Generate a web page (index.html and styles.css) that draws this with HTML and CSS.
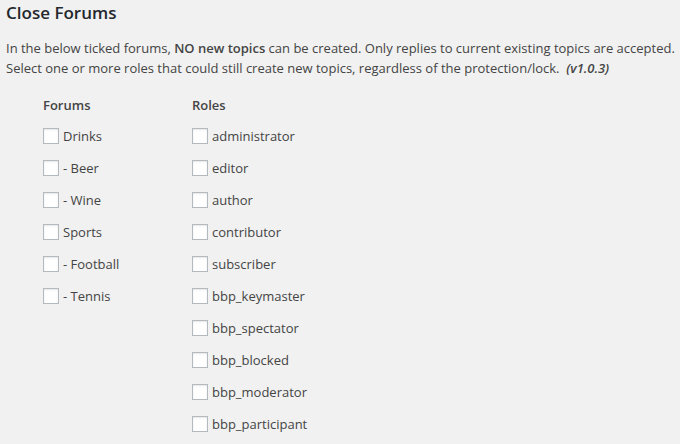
FILE: index.html
```html
<!DOCTYPE html>
<html>
<head>
<meta charset="utf-8">
<link rel="stylesheet" href="styles.css">
</head>
<body>
<div class="wrap">
  <h2 class="title">Close Forums</h2>
  <p class="intro">In the below ticked forums, <strong>NO new topics</strong> can be created. Only replies to current existing topics are accepted.<br>Select one or more roles that could still create new topics, regardless of the protection/lock.&nbsp; <em class="ver">(v1.0.3)</em></p>
  <div class="cols">
    <div class="col col-forums">
      <div class="head">Forums</div>
      <label class="row"><span class="cb"></span>Drinks</label>
      <label class="row"><span class="cb"></span>- Beer</label>
      <label class="row"><span class="cb"></span>- Wine</label>
      <label class="row"><span class="cb"></span>Sports</label>
      <label class="row"><span class="cb"></span>- Football</label>
      <label class="row"><span class="cb"></span>- Tennis</label>
    </div>
    <div class="col col-roles">
      <div class="head">Roles</div>
      <label class="row"><span class="cb"></span>administrator</label>
      <label class="row"><span class="cb"></span>editor</label>
      <label class="row"><span class="cb"></span>author</label>
      <label class="row"><span class="cb"></span>contributor</label>
      <label class="row"><span class="cb"></span>subscriber</label>
      <label class="row"><span class="cb"></span>bbp_keymaster</label>
      <label class="row"><span class="cb"></span>bbp_spectator</label>
      <label class="row"><span class="cb"></span>bbp_blocked</label>
      <label class="row"><span class="cb"></span>bbp_moderator</label>
      <label class="row"><span class="cb"></span>bbp_participant</label>
    </div>
  </div>
</div>
</body>
</html>
```

FILE: styles.css
```css
html, body {
  margin: 0;
  padding: 0;
  background: #f1f1f1;
}
body {
  font-family: "Open Sans", sans-serif;
  font-size: 13px;
  color: #444;
  overflow: hidden;
}
.wrap {
  padding: 0 0 0 6px;
}
.title {
  margin: 0;
  padding-top: 1px;
  font-size: 17px;
  font-weight: 600;
  line-height: 24px;
  color: #23282d;
}
.intro {
  margin: 13px 0 0;
  line-height: 20px;
  white-space: nowrap;
}
.intro strong {
  font-weight: 600;
}
.ver {
  font-weight: 600;
  font-style: italic;
}
.cols {
  display: flex;
  margin-top: 10px;
  padding-left: 37px;
}
.col-forums {
  width: 149px;
}
.col {
  display: flex;
  flex-direction: column;
}
.head {
  font-weight: 600;
  line-height: 20px;
  height: 20px;
  margin-top: 7px;
  margin-bottom: 5px;
}
.row {
  display: flex;
  align-items: center;
  height: 32px;
  line-height: 20px;
}
.cb {
  box-sizing: border-box;
  width: 16px;
  height: 16px;
  border: 1px solid #b4b9be;
  background: #fff;
  box-shadow: inset 0 1px 2px rgba(0,0,0,0.1);
  margin-right: 4px;
  flex: none;
}
```
